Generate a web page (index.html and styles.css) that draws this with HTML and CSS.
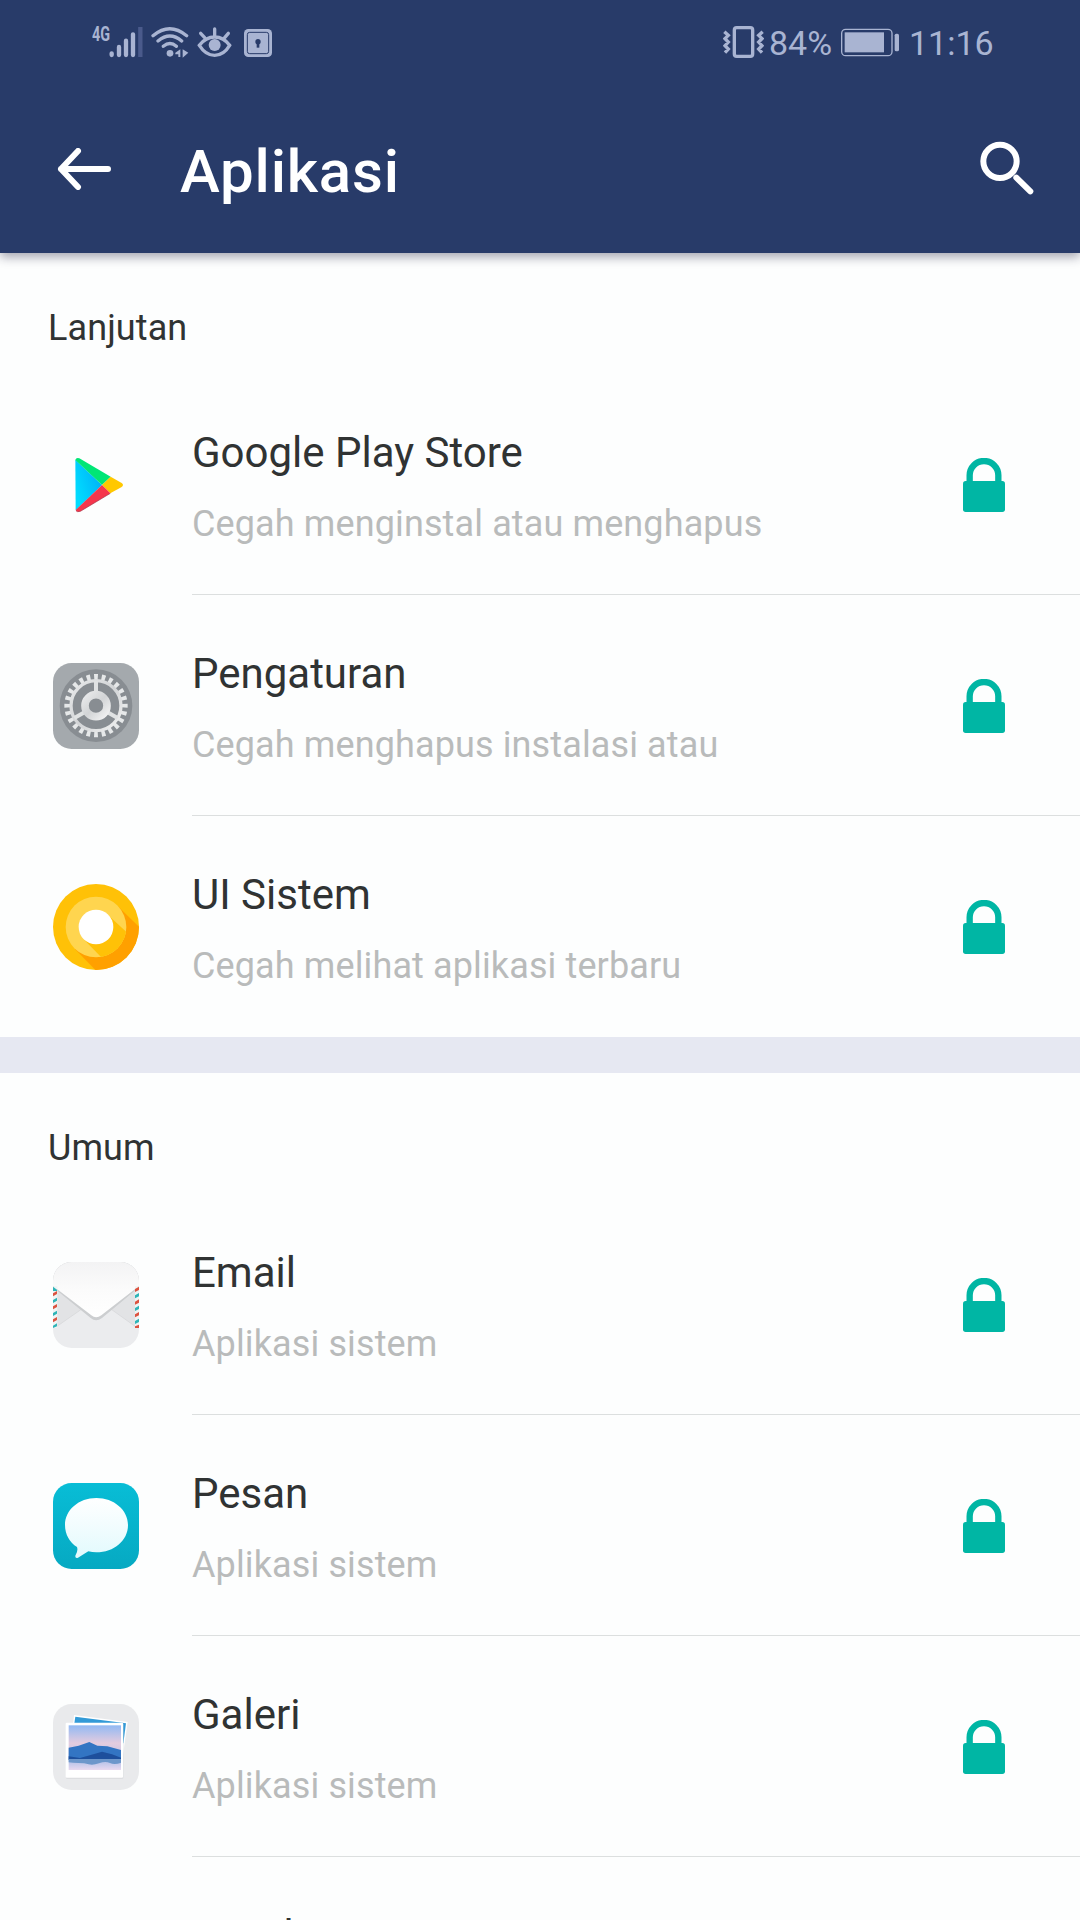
FILE: index.html
```html
<!DOCTYPE html>
<html lang="id">
<head>
    <meta charset="UTF-8" />
    <meta name="viewport" content="width=device-width, initial-scale=1.0" />
    <title>Aplikasi</title>
    <link rel="stylesheet" href="styles.css">
</head>
<body>
    <svg class="defs" width="0" height="0">
        <symbol id="lock" viewBox="0 0 126 162">
            <path d="M20 76V52a43 43 0 0 1 86 0v24" fill="none" stroke="#00b6a4" stroke-width="19" />
            <rect y="69" width="126" height="93" rx="8" fill="#00b6a4" />
        </symbol>
    </svg>

    <header class="header">
        <div class="status-bar">
            <span class="network">4G</span>
            <svg class="signal" viewBox="87 0 102 210" fill="none" stroke="#a9b4d2" stroke-width="13" stroke-linecap="round">
                <path d="M95 130v5M117 111v24M138 92v43M159 73v62" />
                <path d="M181 51v90" stroke="#4a5a8b" stroke-linecap="butt" />
            </svg>
            <svg class="wifi" viewBox="213 0 117 210" fill="none" stroke="#a9b4d2" stroke-width="10" stroke-linecap="round">
                <path d="M219 77q50-42 101 0M234 93q36-30 71 0M250 109q20-17 39 0" />
                <circle cx="270" cy="130" r="10" fill="#a9b4d2" stroke="none" />
                <path d="M301 118v23h-6v-8h-9v-5zM308 118l17 10-12 11-5 4z" fill="#a9b4d2" stroke="none" />
            </svg>
            <svg class="eye" viewBox="351 0 105 210" fill="none" stroke="#a9b4d2" stroke-width="10" stroke-linecap="round">
                <path d="M358 106q19-25 46-25t45 25q-18 30-45 30t-46-30zM404 78V57M374 83l-12-13M434 83l11-13" />
                <circle cx="404" cy="105" r="18" fill="#a9b4d2" stroke="none" />
            </svg>
            <svg class="app-lock" viewBox="489 0 90 210">
                <rect x="492" y="57" width="84" height="84" rx="13" fill="#a9b4d2" />
                <rect x="502" y="67" width="64" height="64" rx="7" fill="none" stroke="#283b69" stroke-width="3" />
                <path d="M530 99h8v14h-8z" fill="#283b69" />
                <circle cx="534" cy="95" r="8" fill="#283b69" />
            </svg>
            <span class="spacer"></span>
            <svg class="vibrate" viewBox="69 0 123 210" fill="none" stroke="#a9b4d2" stroke-width="10">
                <rect x="103" y="53" width="55" height="86" rx="7" />
                <path d="M73 65l12 11-10 10 10 10-10 11 10 10-10 11M188 65l-12 11 10 10-10 10 10 11-10 10 10 11" />
            </svg>
            <span class="percent">84%</span>
            <svg class="battery" viewBox="423 0 177 210">
                <rect x="425" y="58" width="151" height="79" rx="12" fill="none" stroke="#a9b4d2" stroke-width="4" />
                <rect x="434" y="67" width="118" height="60" fill="#a9b4d2" />
                <rect x="584" y="71" width="13" height="53" rx="5" fill="#a9b4d2" />
            </svg>
            <span class="clock">11:16</span>
        </div>

        <div class="toolbar">
            <svg class="back" viewBox="0 0 54 42" fill="none" stroke="#fff" stroke-width="6" stroke-linecap="round" stroke-linejoin="round">
                <path d="M51 21H4M21 3L4 21l17 18" />
            </svg>
            <h1>Aplikasi</h1>
            <svg class="search" viewBox="0 0 162 162" fill="none" stroke="#fff" stroke-width="18">
                <circle cx="60" cy="61" r="50" />
                <path d="M109 110l42 41" stroke-linecap="round" />
            </svg>
        </div>
    </header>

    <main>
        <section class="section">
            <h2>Lanjutan</h2>
            <div class="row">
                <svg class="icon" viewBox="69 66 258 258">
                    <defs>
                        <linearGradient id="blue" x1="1" y1="0" x2="0" y2="0.6">
                            <stop offset="0" stop-color="#00a8f5" />
                            <stop offset="1" stop-color="#00dcff" />
                        </linearGradient>
                    </defs>
                    <path d="M136 119L216 195L137 271Z" fill="url(#blue)" />
                    <path d="M136 120q2-8 12-5L242 170L216 195Z" fill="#00e676" />
                    <path d="M242 170L275 189q8 6 0 12L241 220L216 195Z" fill="#ffc800" />
                    <path d="M216 195L241 220L151 274q-11 4-14-4Z" fill="#f5364c" />
                    <path d="M138 272q3 5 13 2l90-54" fill="none" stroke="#a52b40" stroke-width="2" />
                </svg>
                <div class="text">
                    <div class="name">Google Play Store</div>
                    <div class="info">Cegah menginstal atau menghapus</div>
                </div>
                <svg class="lock"><use href="#lock" /></svg>
            </div>
            <div class="row">
                <svg class="icon" viewBox="69 69 258 258">
                    <defs>
                        <linearGradient id="steel" x1="0" y1="0" x2="1" y2="1">
                            <stop offset="0" stop-color="#e8e9ea" />
                            <stop offset="0.5" stop-color="#d2d4d6" />
                            <stop offset="1" stop-color="#f2f2f2" />
                        </linearGradient>
                    </defs>
                    <rect x="69" y="69" width="258" height="258" rx="56" fill="#a4a9ad" />
                    <circle cx="198" cy="197" r="109" fill="#888d92" />
                    <circle cx="198" cy="197" r="86" fill="none" stroke="#e6e8e9" stroke-width="18" pathLength="240" stroke-dasharray="5 5" stroke-dashoffset="2.5" />
                    <circle cx="198" cy="197" r="75" fill="none" stroke="url(#steel)" stroke-width="10" />
                    <path d="M198 197V122M198 197L133 234M198 197L263 234" stroke="#e0e2e3" stroke-width="12" />
                    <circle cx="198" cy="197" r="33" fill="#888d92" stroke="url(#steel)" stroke-width="23" />
                </svg>
                <div class="text">
                    <div class="name">Pengaturan</div>
                    <div class="info">Cegah menghapus instalasi atau</div>
                </div>
                <svg class="lock"><use href="#lock" /></svg>
            </div>
            <div class="row">
                <svg class="icon" viewBox="69 72 258 258">
                    <clipPath id="disc"><circle cx="198" cy="201" r="129" /></clipPath>
                    <clipPath id="ring"><circle cx="198" cy="201" r="91" /></clipPath>
                    <circle cx="198" cy="201" r="129" fill="#ffc107" />
                    <path d="M262 137L340 213V340H206L134 266Z" fill="#ffa000" clip-path="url(#disc)" />
                    <circle cx="198" cy="201" r="91" fill="#ffd54f" />
                    <path d="M234 165L300 226V300H222L161 238Z" fill="#ffc107" clip-path="url(#ring)" />
                    <circle cx="198" cy="201" r="52" fill="#fff" />
                </svg>
                <div class="text">
                    <div class="name">UI Sistem</div>
                    <div class="info">Cegah melihat aplikasi terbaru</div>
                </div>
                <svg class="lock"><use href="#lock" /></svg>
            </div>
        </section>

        <section class="section">
            <h2>Umum</h2>
            <div class="row">
                <svg class="icon" viewBox="69 66 258 258">
                    <defs>
                        <linearGradient id="flap" x1="0" y1="0" x2="0" y2="1">
                            <stop offset="0" stop-color="#f3f3f4" />
                            <stop offset="0.5" stop-color="#fbfbfb" />
                            <stop offset="1" stop-color="#fff" />
                        </linearGradient>
                    </defs>
                    <clipPath id="envelope"><rect x="69" y="66" width="258" height="258" rx="56" /></clipPath>
                    <g clip-path="url(#envelope)">
                        <rect x="69" y="66" width="258" height="258" fill="#ebecee" />
                        <path d="M69 140L154 208L75 263M327 140L244 208L321 263" fill="#e2e3e5" stroke="#dadbdd" stroke-width="3" />
                        <path d="M69 66H327V142L216 234Q198 248 182 234L69 142Z" fill="#ccced0" />
                        <path d="M69 66H327V138L214 226Q198 238 184 226L69 138Z" fill="url(#flap)" />
                    </g>
                    <path d="M69 139h13v125H69zM315 139h12v125h-12z" fill="#eff4f4" />
                    <path d="M69 140l12 9v4H69zM69 180l12-7v9l-12 7zM69 219l12-7v9l-12 7zM69 257l12-7v9l-12 5zM315 166l12-7v10l-12 6zM315 204l12-7v10l-12 6zM315 243l12-7v10l-12 6z" fill="#2fb4b7" />
                    <path d="M69 160l12-7v9l-12 7zM69 199l12-7v9l-12 7zM69 238l12-7v9l-12 7zM315 147l12-7v10l-12 6zM315 185l12-7v10l-12 6zM315 223l12-7v10l-12 6zM315 259l12-5v10h-12z" fill="#dc5340" />
                </svg>
                <div class="text">
                    <div class="name">Email</div>
                    <div class="info">Aplikasi sistem</div>
                </div>
                <svg class="lock"><use href="#lock" /></svg>
            </div>
            <div class="row">
                <svg class="icon" viewBox="69 69 258 258">
                    <defs>
                        <linearGradient id="teal" x1="0" y1="0" x2="0" y2="1">
                            <stop offset="0" stop-color="#08bdd6" />
                            <stop offset="1" stop-color="#06a9c2" />
                        </linearGradient>
                        <linearGradient id="bubble" x1="0" y1="0" x2="0" y2="1">
                            <stop offset="0" stop-color="#fff" />
                            <stop offset="1" stop-color="#e2fafd" />
                        </linearGradient>
                    </defs>
                    <rect x="69" y="69" width="258" height="258" rx="56" fill="url(#teal)" />
                    <path d="M199 114C252 114 294 150 294 195C294 242 252 277 199 277Q187 277 175 274L144 293Q135 296 136 287Q145 273 141 261C119 248 105 223 105 195C105 150 146 114 199 114Z" fill="url(#bubble)" />
                </svg>
                <div class="text">
                    <div class="name">Pesan</div>
                    <div class="info">Aplikasi sistem</div>
                </div>
                <svg class="lock"><use href="#lock" /></svg>
            </div>
            <div class="row">
                <svg class="icon" viewBox="69 72 258 258">
                    <defs>
                        <linearGradient id="sky" x1="0" y1="0" x2="0" y2="1">
                            <stop offset="0" stop-color="#92b9f3" />
                            <stop offset="0.4" stop-color="#e4ccdf" />
                            <stop offset="0.8" stop-color="#b5c2e8" />
                            <stop offset="1" stop-color="#eadaf0" />
                        </linearGradient>
                    </defs>
                    <rect x="69" y="72" width="258" height="258" rx="56" fill="#e9eaec" />
                    <path d="M132 105L293 126L274 260L118 235Z" fill="#fff" />
                    <path d="M136 110L288 130L280 190L130 150Z" fill="#329ad7" />
                    <rect x="108" y="129" width="172" height="167" rx="3" fill="#d9dadd" />
                    <rect x="107" y="128" width="172" height="165" rx="3" fill="#fff" />
                    <rect x="116" y="136" width="157" height="134" fill="url(#sky)" />
                    <path d="M116 203L146 197L178 186L202 197L232 199L273 210V238H116Z" fill="#3375c3" />
                    <path d="M116 229L150 234L190 223L216 215L246 223L273 233V240H116Z" fill="#1d4f9c" />
                    <path d="M116 237H273V248Q254 255 240 249T207 250T176 253T146 249T116 247Z" fill="#6d97cb" />
                </svg>
                <div class="text">
                    <div class="name">Galeri</div>
                    <div class="info">Aplikasi sistem</div>
                </div>
                <svg class="lock"><use href="#lock" /></svg>
            </div>
            <div class="row">
                <div class="icon"></div>
                <div class="text">
                    <div class="name">Musik</div>
                </div>
            </div>
        </section>
    </main>
</body>
</html>
```
FILE: styles.css
```css
* {
    box-sizing: border-box;
    margin: 0;
    padding: 0;
}

html {
    overflow: hidden;
}

body {
    background: #fdfefe;
    color: #303333;
    font-family: Roboto, sans-serif;
    height: 1920px;
    overflow: hidden;
}

svg {
    display: block;
    flex: none;
}

.defs {
    display: none;
}

.header {
    position: relative;
    height: 253px;
    background: #283b69;
    box-shadow: 0 4px 10px rgba(30, 30, 60, 0.4);
}

.status-bar {
    display: flex;
    height: 86px;
    padding: 10px 87px 0 92px;
    color: #a9b4d2;
    font-size: 34px;
    line-height: 67px;
}

.status-bar svg {
    height: 70px;
}

.network {
    width: 17px;
    font-size: 20px;
    font-weight: bold;
    line-height: 48px;
    transform: scaleX(0.72);
    transform-origin: left;
}

.signal {
    width: 34px;
}

.wifi {
    width: 39px;
    margin-left: 8px;
}

.eye {
    width: 35px;
    margin-left: 7px;
}

.app-lock {
    width: 30px;
    margin-left: 11px;
}

.spacer {
    flex: 1;
}

.vibrate {
    width: 41px;
}

.percent {
    width: 72px;
    margin-left: 5px;
}

.battery {
    width: 59px;
}

.clock {
    width: 84px;
    margin-left: 9px;
    white-space: nowrap;
}

.toolbar {
    display: flex;
    align-items: center;
    height: 167px;
    padding: 0 46px 0 57px;
}

.back {
    width: 54px;
    height: 42px;
    margin-bottom: 1px;
}

h1 {
    flex: 1;
    margin-left: 69px;
    padding-top: 4px;
    color: #fff;
    font-size: 60px;
    font-weight: 500;
    letter-spacing: 0.8px;
    line-height: 80px;
}

.search {
    width: 54px;
    height: 54px;
    margin-bottom: 3px;
}

.section + .section {
    border-top: 36px solid #e6e8f2;
}

h2 {
    padding: 51px 48px 22px;
    font-size: 36px;
    font-weight: 400;
    letter-spacing: 0.1px;
    line-height: 48px;
}

.row {
    display: flex;
    height: 221px;
    padding-left: 53px;
}

.icon {
    width: 86px;
    height: 86px;
    margin-top: 68px;
}

.text {
    flex: 1;
    margin-left: 53px;
    padding-top: 51px;
    border-bottom: 1px solid #dcdfdf;
    white-space: nowrap;
}

.name {
    font-size: 42px;
    line-height: 56px;
}

.info {
    margin-top: 19px;
    color: #b9bbbb;
    font-size: 36px;
    letter-spacing: 0.12px;
    line-height: 48px;
}

.lock {
    width: 117px;
    height: 221px;
    padding: 84px 75px 82px 0;
    border-bottom: 1px solid #dcdfdf;
}

.section:first-child .row:last-child .text,
.section:first-child .row:last-child .lock {
    border-color: transparent;
}
```
